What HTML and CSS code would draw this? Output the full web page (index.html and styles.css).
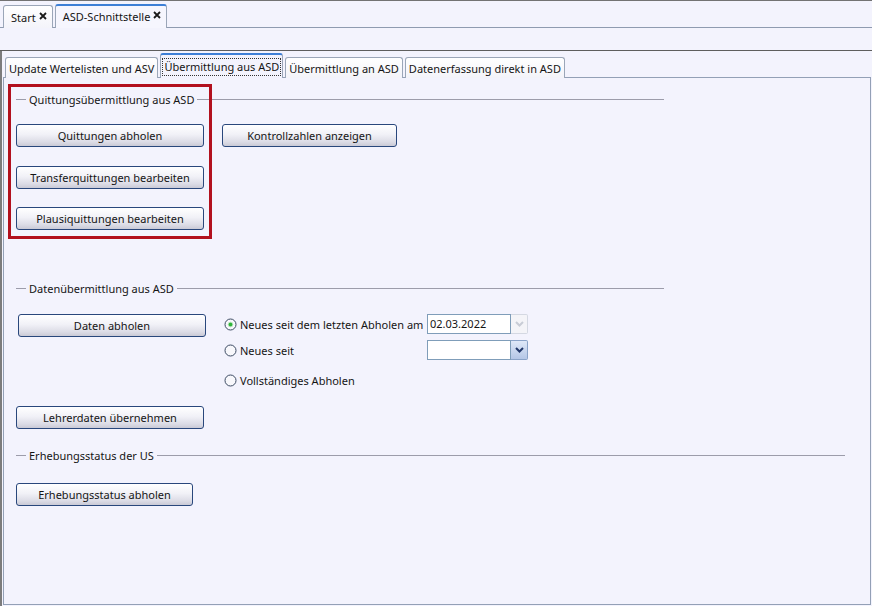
FILE: index.html
```html
<!DOCTYPE html>
<html lang="de">
<head>
    <meta charset="UTF-8">
    <title>ASD-Schnittstelle</title>
    <link rel="stylesheet" href="styles.css">
</head>
<body>
    <!-- Dokument-Reiter -->
    <div class="doc-tabs">
        <div class="doc-tab">Start <svg class="close" viewBox="0 0 8 8"><path d="M1 1L7 7M7 1L1 7"/></svg></div>
        <div class="doc-tab active">ASD-Schnittstelle <svg class="close" viewBox="0 0 8 8"><path d="M1 1L7 7M7 1L1 7"/></svg></div>
    </div>
    <div class="toolbar"></div>

    <div class="workspace">
        <div class="page-tabs">
            <div class="page-tab">Update Wertelisten und ASV</div>
            <div class="page-tab active"><span class="focus">Übermittlung aus ASD</span></div>
            <div class="page-tab">Übermittlung an ASD</div>
            <div class="page-tab">Datenerfassung direkt in ASD</div>
        </div>

        <div class="panel">
            <div class="highlight"></div>

            <div class="group-title first"><span class="line-l"></span><span>Quittungsübermittlung aus ASD</span><span class="line-r"></span></div>
            <div class="btn-row gap-17">
                <button class="btn w188">Quittungen abholen</button>
                <button class="btn w175">Kontrollzahlen anzeigen</button>
            </div>
            <div class="btn-row gap-19">
                <button class="btn w188">Transferquittungen bearbeiten</button>
            </div>
            <div class="btn-row gap-18">
                <button class="btn w188">Plausiquittungen bearbeiten</button>
            </div>

            <div class="group-title gap-50"><span class="line-l"></span><span>Datenübermittlung aus ASD</span><span class="line-r"></span></div>
            <div class="data-row">
                <button class="btn w188 shift">Daten abholen</button>
                <div class="options">
                    <div class="option">
                        <label class="radio"><svg viewBox="0 0 13 13"><circle class="ring" cx="6.5" cy="6.5" r="5.5"/><circle class="dot" cx="6.5" cy="6.5" r="2.3"/></svg>Neues seit dem letzten Abholen am</label>
                        <div class="combo disabled">
                            <span class="value">02.03.2022</span>
                            <span class="drop"><svg viewBox="0 0 9 6"><path d="M1 1L4.5 4.5L8 1"/></svg></span>
                        </div>
                    </div>
                    <div class="option">
                        <label class="radio"><svg viewBox="0 0 13 13"><circle class="ring" cx="6.5" cy="6.5" r="5.5"/></svg>Neues seit</label>
                        <div class="combo">
                            <span class="value"></span>
                            <span class="drop"><svg viewBox="0 0 9 6"><path d="M1 1L4.5 4.5L8 1"/></svg></span>
                        </div>
                    </div>
                    <div class="option third">
                        <label class="radio"><svg viewBox="0 0 13 13"><circle class="ring" cx="6.5" cy="6.5" r="5.5"/></svg>Vollständiges Abholen</label>
                    </div>
                </div>
            </div>
            <div class="btn-row gap-16">
                <button class="btn w188">Lehrerdaten übernehmen</button>
            </div>

            <div class="group-title wide gap-18"><span class="line-l"></span><span>Erhebungsstatus der US</span><span class="line-r"></span></div>
            <div class="btn-row gap-20">
                <button class="btn w177">Erhebungsstatus abholen</button>
            </div>
        </div>
    </div>
</body>
</html>
```

FILE: styles.css
```css
* {
    margin: 0;
    padding: 0;
    box-sizing: border-box;
}

html, body {
    height: 100%;
}

body {
    background: #f3f3fd;
    font-family: 'Noto Sans', 'Liberation Sans', Arial, sans-serif;
    font-size: 11px;
    color: #151515;
    display: flex;
    flex-direction: column;
    overflow: hidden;
    white-space: nowrap;
}

/* Dokument-Reiter oben */
.doc-tabs {
    height: 28px;
    border-top: 1px solid #737373;
    border-bottom: 1px solid #8f9bb0;
    display: flex;
    align-items: flex-end;
    gap: 2px;
    padding-left: 3px;
}

.doc-tab {
    height: 23px;
    margin-bottom: -1px;
    padding: 0 5px 0 7px;
    display: flex;
    align-items: center;
    gap: 3px;
    border: 1px solid #9ba6b8;
    border-bottom: none;
    border-radius: 3px 3px 0 0;
    background: linear-gradient(#ffffff, #f4f4fa);
}

.doc-tab.active {
    border-top: 2px solid #3d7fd6;
    background: #f6f6fe;
    height: 24px;
    padding-bottom: 1px;
}

.close {
    width: 8px;
    height: 8px;
    margin-top: -3px;
}

.close path {
    stroke: #1a1a1a;
    stroke-width: 1.8;
    fill: none;
}

.toolbar {
    height: 23px;
    border-bottom: 1px solid #5e5e5e;
}

/* Arbeitsbereich */
.workspace {
    flex: 1;
    display: flex;
    flex-direction: column;
    border-left: 2px solid #7c7c7c;
    padding-bottom: 1px;
}

.page-tabs {
    height: 26px;
    display: flex;
    align-items: flex-end;
    gap: 2px;
    padding-left: 3px;
}

.page-tab {
    height: 21px;
    margin-bottom: -1px;
    padding: 0 3px;
    display: flex;
    align-items: center;
    border: 1px solid #9ba6b8;
    border-bottom: none;
    border-radius: 3px 3px 0 0;
    background: linear-gradient(#ffffff, #f3f3f9);
    position: relative;
    z-index: 1;
}

.page-tab.active {
    height: 25px;
    padding: 0 1px;
    border-top: 2px solid #3d7fd6;
    background: #f3f3fd;
}

.focus {
    border: 1px dotted #333;
    padding: 0 1px;
    line-height: 16px;
}

.panel {
    flex: 1;
    position: relative;
    margin: 0 1px 0 1px;
    border: 1px solid #93a0b6;
    padding: 13px 0 0 12px;
}

/* rote Markierung */
.highlight {
    position: absolute;
    left: 4px;
    top: 6px;
    width: 204px;
    height: 155px;
    border: 3px solid #b2101e;
    pointer-events: none;
}

.group-title {
    width: 648px;
    height: 16px;
    display: flex;
    align-items: center;
    gap: 3px;
}

.group-title.wide {
    width: 829px;
}

.line-l {
    width: 10px;
    border-top: 1px solid #9c9caa;
}

.line-r {
    flex: 1;
    border-top: 1px solid #9c9caa;
}

.btn-row {
    display: flex;
    gap: 18px;
}

.gap-16 { margin-top: 16px; }
.gap-17 { margin-top: 17px; }
.gap-18 { margin-top: 18px; }
.gap-19 { margin-top: 19px; }
.gap-20 { margin-top: 20px; }
.gap-50 { margin-top: 50px; }

.btn {
    height: 23px;
    font-family: inherit;
    font-size: 11px;
    color: #151515;
    border: 1px solid #29477c;
    border-radius: 3px;
    background: linear-gradient(#ffffff 0%, #f1f1f7 45%, #dcdce6 80%, #cacad6 100%);
}

.w188 { width: 188px; }
.w175 { width: 175px; }
.w177 { width: 177px; }

.shift {
    margin-left: 2px;
}

.data-row {
    margin-top: 18px;
    display: flex;
    gap: 18px;
    align-items: flex-start;
}

.options {
    display: flex;
    flex-direction: column;
    gap: 6px;
}

.option {
    height: 20px;
    display: flex;
    align-items: center;
}

.option.third {
    margin-top: 4px;
}

.radio {
    width: 203px;
    display: flex;
    align-items: center;
    gap: 3px;
}

.radio svg {
    width: 13px;
    height: 13px;
}

.ring {
    fill: #f8f8fc;
    stroke: #3b4a62;
    stroke-width: 1;
}

.dot {
    fill: #2fb43a;
    stroke: #b8e6bc;
    stroke-width: 1;
}

.combo {
    display: flex;
    height: 20px;
}

.combo .value {
    width: 84px;
    border: 1px solid #7f9db9;
    background: #ffffff;
    padding-left: 2px;
    line-height: 18px;
}

.combo .drop {
    width: 17px;
    display: flex;
    align-items: center;
    justify-content: center;
    border: 1px solid #8aa3c8;
    border-left: none;
    border-radius: 0 2px 2px 0;
    background: linear-gradient(#dfe8f8, #b4c6e6);
}

.combo .drop svg {
    width: 9px;
    height: 6px;
}

.combo .drop path {
    fill: none;
    stroke: #22386a;
    stroke-width: 2;
}

.combo.disabled .drop {
    border-color: #d4d8e2;
    background: #f4f4f8;
}

.combo.disabled .drop path {
    stroke: #c8ccd6;
}
```
